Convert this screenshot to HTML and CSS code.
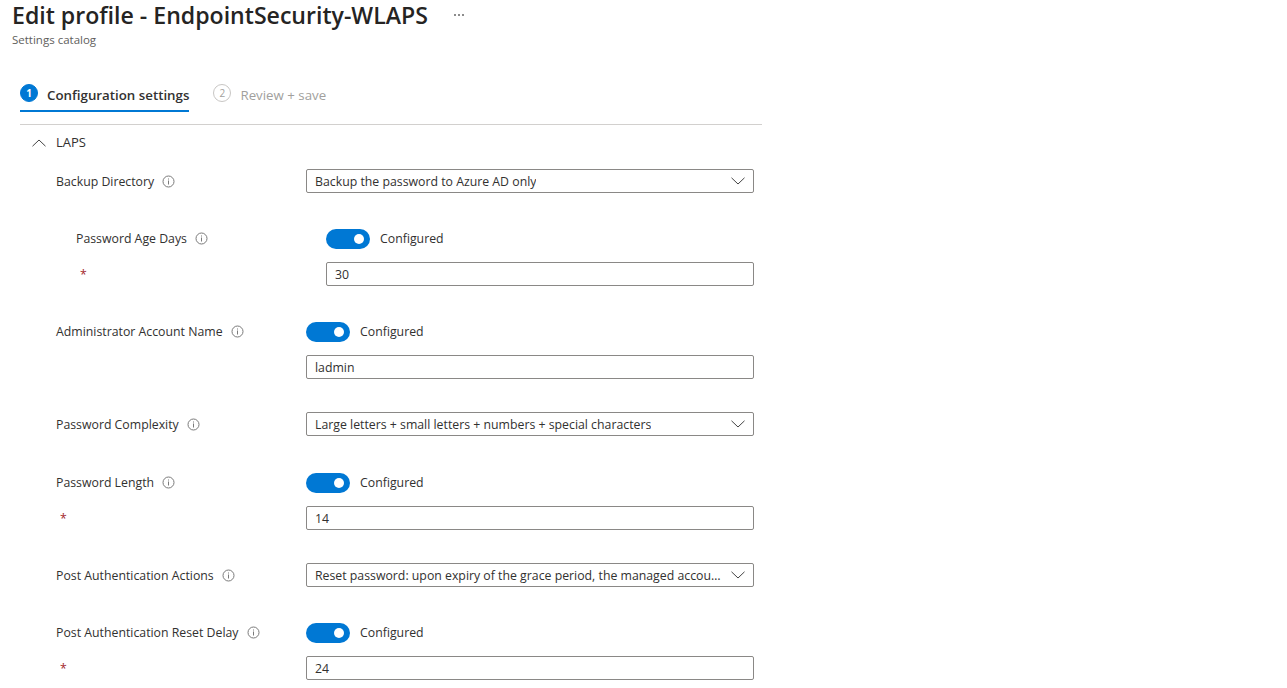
FILE: index.html
```html
<!DOCTYPE html>
<html lang="en">
  <head>
    <meta charset="UTF-8" />
    <title>Edit profile - EndpointSecurity-WLAPS</title>
    <link rel="stylesheet" href="styles.css">
  </head>
  <body>
    <svg class="icon-defs" width="0" height="0">
      <symbol id="info" viewBox="0 0 13 13">
        <circle cx="6.5" cy="6.5" r="5.5" fill="none" stroke="#7a7a7a" stroke-width="1" />
        <rect x="6" y="5.5" width="1" height="4" fill="#7a7a7a" />
        <rect x="6" y="3.5" width="1" height="1" fill="#7a7a7a" />
      </symbol>
      <symbol id="chevron" viewBox="0 0 14 8">
        <path d="M0.5 0.8 L7 7 L13.5 0.8" fill="none" stroke="#444" stroke-width="1" />
      </symbol>
    </svg>

    <div class="header">
      <div class="title-row">
        <h1>Edit profile - EndpointSecurity-WLAPS</h1>
        <span class="more"><i></i><i></i><i></i></span>
      </div>
      <div class="subtitle">Settings catalog</div>
    </div>

    <div class="panel">
      <div class="steps">
        <div class="step active">
          <span class="step-num">1</span>
          <span class="step-text">Configuration settings</span>
        </div>
        <div class="step">
          <span class="step-num">2</span>
          <span class="step-text">Review + save</span>
        </div>
      </div>

      <div class="section-head">
        <svg class="section-chevron" viewBox="0 0 14 8"><path d="M0.5 7.2 L7 1 L13.5 7.2" fill="none" stroke="#444" stroke-width="1" /></svg>
        <span class="section-name">LAPS</span>
      </div>

      <div class="setting">
        <div class="label">Backup Directory <svg class="info"><use href="#info" /></svg></div>
        <div class="select"><span class="select-text">Backup the password to Azure AD only</span><svg class="chevron"><use href="#chevron" /></svg></div>
      </div>

      <div class="setting nested">
        <div class="label">Password Age Days <svg class="info"><use href="#info" /></svg></div>
        <div class="toggle-row"><span class="toggle"></span>Configured</div>
      </div>
      <div class="setting nested sub">
        <div class="label required">*</div>
        <div class="input">30</div>
      </div>

      <div class="setting">
        <div class="label">Administrator Account Name <svg class="info"><use href="#info" /></svg></div>
        <div class="toggle-row"><span class="toggle"></span>Configured</div>
      </div>
      <div class="setting sub">
        <div class="label"></div>
        <div class="input">ladmin</div>
      </div>

      <div class="setting wide-gap">
        <div class="label">Password Complexity <svg class="info"><use href="#info" /></svg></div>
        <div class="select"><span class="select-text">Large letters + small letters + numbers + special characters</span><svg class="chevron"><use href="#chevron" /></svg></div>
      </div>

      <div class="setting">
        <div class="label">Password Length <svg class="info"><use href="#info" /></svg></div>
        <div class="toggle-row"><span class="toggle"></span>Configured</div>
      </div>
      <div class="setting sub">
        <div class="label required">*</div>
        <div class="input">14</div>
      </div>

      <div class="setting">
        <div class="label">Post Authentication Actions <svg class="info"><use href="#info" /></svg></div>
        <div class="select"><span class="select-text">Reset password: upon expiry of the grace period, the managed account password will be reset</span><svg class="chevron"><use href="#chevron" /></svg></div>
      </div>

      <div class="setting">
        <div class="label">Post Authentication Reset Delay <svg class="info"><use href="#info" /></svg></div>
        <div class="toggle-row"><span class="toggle"></span>Configured</div>
      </div>
      <div class="setting sub">
        <div class="label required">*</div>
        <div class="input">24</div>
      </div>
    </div>
  </body>
</html>
```

FILE: styles.css
```css
html,
body {
  height: 688px;
  overflow: hidden;
}

body {
  font-family: "Open Sans", "Noto Sans", Arial, sans-serif;
  font-size: 12.3px;
  margin: 0;
  background: #fff;
  color: #323130;
}

.icon-defs {
  display: block;
  height: 0;
}

.header {
  padding: 0 0 0 12px;
}

.title-row {
  display: flex;
  align-items: center;
  gap: 26px;
}

.title-row h1 {
  margin: 0;
  font-size: 23.1px;
  line-height: 30px;
  font-weight: 600;
  color: #252423;
}

.more {
  display: flex;
  gap: 2px;
}

.more i {
  width: 2px;
  height: 2px;
  border-radius: 50%;
  background: #666;
}

.subtitle {
  font-size: 11.5px;
  line-height: 16px;
  margin-top: 2px;
  color: #605e5c;
}

.panel {
  width: 742px;
  margin: 28px 0 0 20px;
}

.steps {
  display: flex;
  gap: 24px;
  height: 48px;
  border-bottom: 1px solid #d2d0ce;
}

.step {
  display: flex;
  align-items: center;
  gap: 9px;
  height: 34px;
  font-size: 13.3px;
  color: #a19f9d;
}

.step-text {
  padding-top: 3px;
}

.step.active {
  font-weight: 600;
  color: #323130;
  border-bottom: 2px solid #0078d4;
}

.step-num {
  width: 16px;
  height: 16px;
  border: 1px solid #c8c6c4;
  border-radius: 50%;
  font-size: 10px;
  line-height: 16px;
  text-align: center;
}

.step.active .step-num {
  background: #0078d4;
  border-color: #0078d4;
  color: #fff;
  font-weight: 700;
}

.section-head {
  display: flex;
  align-items: center;
  gap: 10px;
  height: 35px;
  padding-left: 12px;
  font-size: 13px;
}

.section-name {
  padding-bottom: 2px;
}

.section-chevron {
  width: 14px;
  height: 8px;
}

.setting {
  display: flex;
  align-items: center;
  min-height: 24px;
  margin: 9px 8px 33px 36px;
}

.setting.nested {
  margin-left: 56px;
}

.setting.sub {
  margin-top: -21px;
}

.setting.wide-gap {
  margin-bottom: 34px;
}

.label {
  width: 250px;
  box-sizing: border-box;
  flex-shrink: 0;
  display: flex;
  align-items: center;
  gap: 8px;
}

.required {
  color: #a4262c;
  padding-left: 4px;
}

.info {
  width: 13px;
  height: 13px;
}

.select,
.input {
  flex: 1;
  min-width: 0;
  height: 24px;
  box-sizing: border-box;
  padding: 0 8px;
  border: 1px solid #8a8886;
  border-radius: 2px;
  line-height: 24px;
}

.select {
  display: flex;
  align-items: center;
  justify-content: space-between;
  gap: 8px;
}

.select-text {
  overflow: hidden;
  white-space: nowrap;
  text-overflow: ellipsis;
  line-height: 24px;
  height: 22px;
}

.chevron {
  width: 14px;
  height: 8px;
  flex-shrink: 0;
}

.toggle-row {
  display: flex;
  align-items: center;
  gap: 10px;
}

.toggle {
  position: relative;
  width: 44px;
  height: 20px;
  margin-top: 2px;
  border-radius: 10px;
  background: #0078d4;
}

.toggle::after {
  content: "";
  position: absolute;
  top: 5px;
  right: 6px;
  width: 10px;
  height: 10px;
  border-radius: 50%;
  background: #fff;
}
```
